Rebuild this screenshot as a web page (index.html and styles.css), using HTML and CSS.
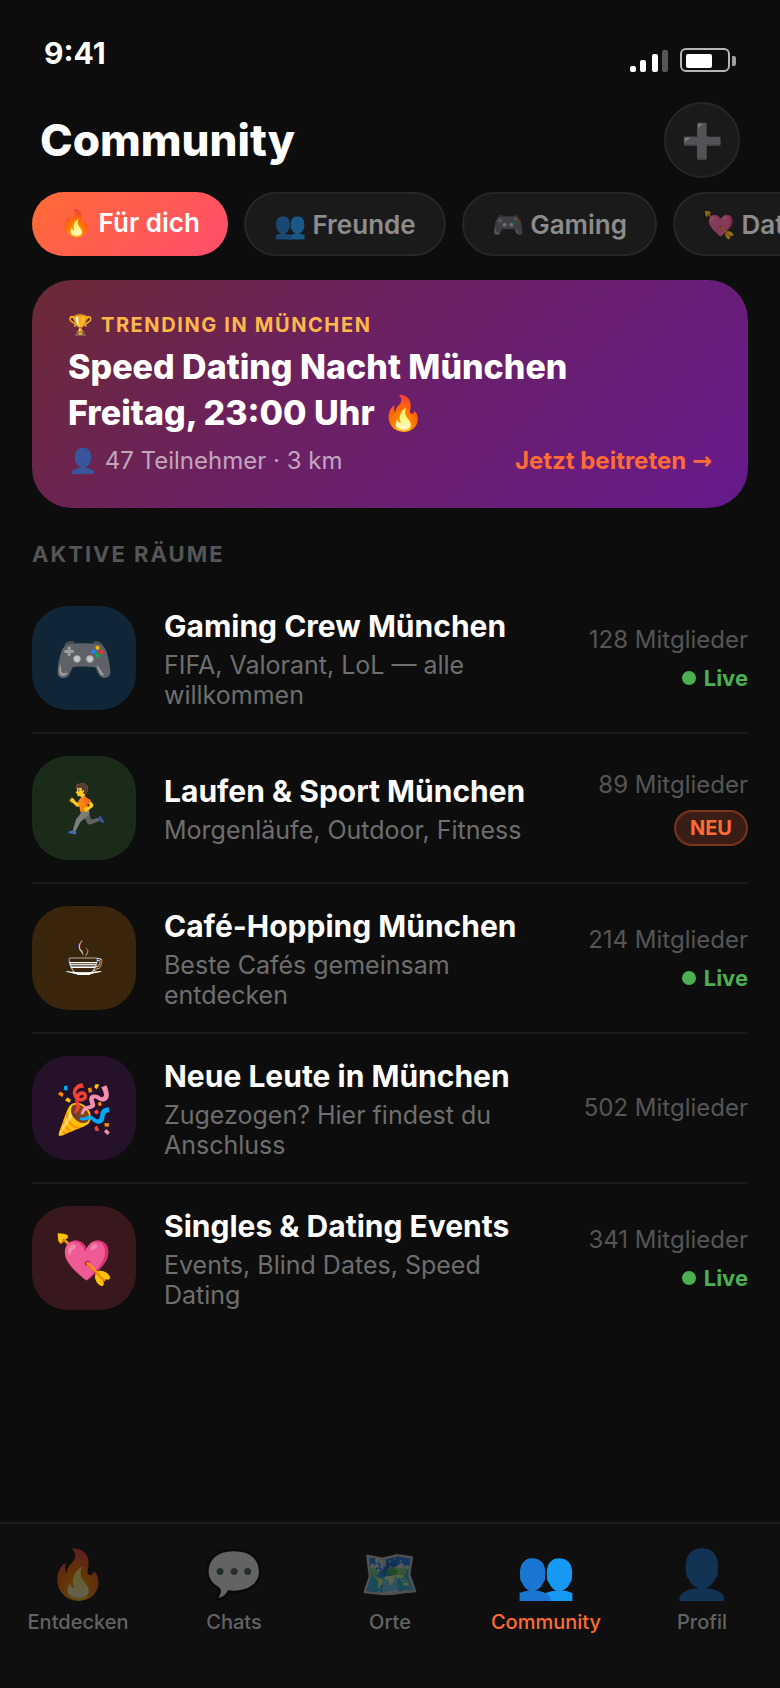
FILE: index.html
```
<!DOCTYPE html>
<html lang="de">
<head>
    <meta charset="UTF-8">
    <meta name="viewport" content="width=device-width, initial-scale=1.0">
    <title>Community</title>
    <link rel="stylesheet" href="styles.css">
</head>

<body>
    <div class="statusbar">
        <span class="time">9:41</span>
        <svg class="status-icons" width="106" height="24" viewBox="0 0 106 24">
            <g fill="#fff">
                <rect x="0" y="18" width="6" height="6" rx="2"/>
                <rect x="10" y="12" width="6" height="12" rx="2"/>
                <rect x="22" y="6" width="6" height="18" rx="2"/>
                <rect x="32" y="2" width="6" height="22" rx="2" opacity=".3"/>
                <rect x="56" y="6" width="26" height="14" rx="2"/>
                <path d="M102 8h2a2 2 0 0 1 2 2v6a2 2 0 0 1-2 2h-2z" opacity=".6"/>
            </g>
            <rect x="51" y="1" width="48" height="22" rx="5" fill="none" stroke="#fff" stroke-width="2" opacity=".7"/>
        </svg>
    </div>
    <header>
        <h1>Community</h1>
        <button class="add" aria-label="Raum erstellen">➕</button>
    </header>
    <div class="tabs">
        <button class="tab active">🔥 Für dich</button>
        <button class="tab">👥 Freunde</button>
        <button class="tab">🎮 Gaming</button>
        <button class="tab">💘 Dating</button>
    </div>
    <main>
        <section class="banner">
            <p class="trend">🏆 TRENDING IN MÜNCHEN</p>
            <h2>Speed Dating Nacht München<br>Freitag, 23:00 Uhr 🔥</h2>
            <div class="banner-row">
                <span class="people">👤 47 Teilnehmer · 3 km</span>
                <a href="#" class="join">Jetzt beitreten <span class="arrow">→</span></a>
            </div>
        </section>
        <h3>AKTIVE RÄUME</h3>
        <ul class="rooms">
            <li class="room">
                <div class="icon blue">🎮</div>
                <div class="info">
                    <h4>Gaming Crew München</h4>
                    <p>FIFA, Valorant, LoL — alle willkommen</p>
                </div>
                <div class="meta">
                    <span class="members">128 Mitglieder</span>
                    <span class="live">Live</span>
                </div>
            </li>
            <li class="room">
                <div class="icon green">🏃</div>
                <div class="info">
                    <h4>Laufen &amp; Sport München</h4>
                    <p>Morgenläufe, Outdoor, Fitness</p>
                </div>
                <div class="meta">
                    <span class="members">89 Mitglieder</span>
                    <span class="new">NEU</span>
                </div>
            </li>
            <li class="room">
                <div class="icon brown">☕</div>
                <div class="info">
                    <h4>Café-Hopping München</h4>
                    <p>Beste Cafés gemeinsam entdecken</p>
                </div>
                <div class="meta">
                    <span class="members">214 Mitglieder</span>
                    <span class="live">Live</span>
                </div>
            </li>
            <li class="room">
                <div class="icon purple">🎉</div>
                <div class="info">
                    <h4>Neue Leute in München</h4>
                    <p>Zugezogen? Hier findest du Anschluss</p>
                </div>
                <div class="meta">
                    <span class="members">502 Mitglieder</span>
                </div>
            </li>
            <li class="room">
                <div class="icon red">💘</div>
                <div class="info">
                    <h4>Singles &amp; Dating Events</h4>
                    <p>Events, Blind Dates, Speed Dating</p>
                </div>
                <div class="meta">
                    <span class="members">341 Mitglieder</span>
                    <span class="live">Live</span>
                </div>
            </li>
        </ul>
    </main>
    <nav>
        <a href="#"><span class="nav-icon">🔥</span>Entdecken</a>
        <a href="#"><span class="nav-icon">💬</span>Chats</a>
        <a href="#"><span class="nav-icon">🗺️</span>Orte</a>
        <a href="#" class="current"><span class="nav-icon">👥</span>Community</a>
        <a href="#"><span class="nav-icon">👤</span>Profil</a>
    </nav>
</body>
</html>
```
FILE: styles.css
```
*{
    box-sizing: border-box;
    margin: 0;
    padding: 0;
}
body{
    background: #0d0d0d;
    color: #fff;
    font-family: Inter, sans-serif;
    min-height: 100vh;
    display: flex;
    flex-direction: column;
}
button{
    font-family: inherit;
    cursor: pointer;
}
a{
    text-decoration: none;
}
.statusbar{
    display: flex;
    justify-content: space-between;
    align-items: flex-end;
    padding: 34px 44px 30px;
}
.time{
    font-size: 30px;
    font-weight: 700;
    line-height: 38px;
}
header{
    display: flex;
    justify-content: space-between;
    align-items: center;
    padding: 0 40px 14px;
}
h1{
    font-size: 44px;
    font-weight: 800;
}
.add{
    width: 76px;
    height: 76px;
    border-radius: 50%;
    border: 2px solid #262626;
    background: #1a1a1a;
    color: rgba(255,255,255,0.8);
    font-size: 34px;
}
/* tabs scroll sideways */
.tabs{
    display: flex;
    gap: 16px;
    padding: 0 32px;
    overflow-x: auto;
    scrollbar-width: none;
}
.tab{
    flex-shrink: 0;
    display: flex;
    align-items: flex-start;
    height: 64px;
    padding: 15px 28px;
    border: 2px solid #262626;
    border-radius: 40px;
    background: #1a1a1a;
    color: rgba(255,255,255,0.5);
    font-size: 26px;
    font-weight: 600;
    line-height: 32px;
    white-space: pre;
}
.active{
    border: none;
    background: linear-gradient(135deg, #ff6b35, #ff4d6d);
    color: #fff;
}
main{
    flex: 1;
    padding: 24px 32px;
}
.banner{
    padding: 32px 36px;
    border-radius: 40px;
    background: linear-gradient(135deg, #6b2a35, #6b2160 40%, #661a8c);
}
.trend{
    color: #ffb74d;
    font-size: 20px;
    font-weight: 700;
    letter-spacing: 0.08em;
    line-height: 26px;
    margin-bottom: 6px;
}
h2{
    font-size: 34px;
    font-weight: 800;
    line-height: 46px;
    margin-bottom: 10px;
}
.banner-row{
    display: flex;
    justify-content: space-between;
    line-height: 30px;
    font-size: 24px;
}
.people{
    color: rgba(255,255,255,0.6);
}
.join{
    color: #ff6b35;
    font-weight: 700;
}
.arrow{
    font-family: "DejaVu Sans", sans-serif;
}
h3{
    margin: 32px 0 16px;
    color: #555;
    font-size: 22px;
    font-weight: 700;
    letter-spacing: 2px;
    line-height: 28px;
}
.rooms{
    list-style: none;
}
.room{
    display: flex;
    align-items: center;
    gap: 28px;
    padding: 22px 0;
    border-bottom: 2px solid #1a1a1a;
}
.room:last-child{
    border-bottom: none;
}
.icon{
    flex-shrink: 0;
    display: flex;
    align-items: center;
    justify-content: center;
    width: 104px;
    height: 104px;
    border-radius: 36px;
    font-size: 48px;
}
.blue{
    background: #102536;
}
.green{
    background: #1a2b1a;
}
.brown{
    background: #38250c;
    font-family: "DejaVu Sans", sans-serif;
}
.purple{
    background: #25112a;
}
.red{
    background: #38181c;
}
.info{
    flex: 1;
}
h4{
    font-size: 30px;
    font-weight: 700;
    line-height: 40px;
    margin-bottom: 4px;
}
.info p{
    color: #6e6e6e;
    font-size: 25px;
    line-height: 30px;
}
.meta{
    display: flex;
    flex-direction: column;
    align-items: flex-end;
    gap: 10px;
}
.members{
    color: #555;
    font-size: 24px;
    line-height: 30px;
}
.live{
    display: flex;
    align-items: center;
    gap: 8px;
    color: #4caf50;
    font-size: 22px;
    font-weight: 700;
}
.live::before{
    content: "";
    width: 14px;
    height: 14px;
    border-radius: 50%;
    background: #4caf50;
}
.new{
    padding: 4px 14px;
    border: 2px solid #78341e;
    border-radius: 20px;
    background: #3a1d14;
    color: #ff6b35;
    font-size: 20px;
    font-weight: 700;
    line-height: 24px;
}
nav{
    display: flex;
    height: 166px;
    padding-top: 22px;
    border-top: 2px solid #1e1e1e;
    background: #0f0f0f;
}
nav a{
    flex: 1;
    display: flex;
    flex-direction: column;
    align-items: center;
    gap: 8px;
    color: #636363;
    font-size: 20px;
    font-weight: 500;
    line-height: 24px;
}
.nav-icon{
    font-size: 48px;
    line-height: 56px;
    opacity: 0.35;
}
nav .current{
    color: #ff6b35;
}
.current .nav-icon{
    opacity: 1;
}
```
